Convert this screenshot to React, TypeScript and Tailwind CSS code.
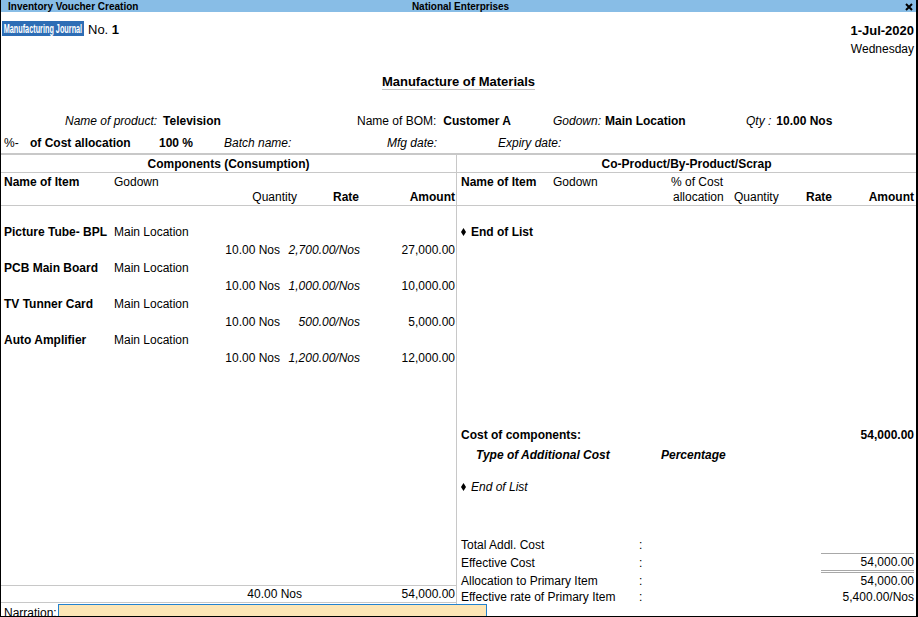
import React from 'react';

const items = [
  { name: 'Picture Tube- BPL', godown: 'Main Location', qty: '10.00 Nos', rate: '2,700.00/Nos', amount: '27,000.00' },
  { name: 'PCB Main Board', godown: 'Main Location', qty: '10.00 Nos', rate: '1,000.00/Nos', amount: '10,000.00' },
  { name: 'TV Tunner Card', godown: 'Main Location', qty: '10.00 Nos', rate: '500.00/Nos', amount: '5,000.00' },
  { name: 'Auto Amplifier', godown: 'Main Location', qty: '10.00 Nos', rate: '1,200.00/Nos', amount: '12,000.00' },
];

function Diamond() {
  return (
    <svg width="5" height="8" viewBox="0 0 5 8" className="inline-block mr-[5px] mb-[2px]">
      <polygon points="2.5,0 5,4 2.5,8 0,4" fill="black" />
    </svg>
  );
}

export default function App() {
  return (
    <div className="w-[918px] h-[617px] overflow-hidden bg-white text-black font-['Liberation_Sans',Arial,sans-serif] text-[12px] leading-[16px] flex flex-col border-l border-r-2 border-b border-black">
      {/* title bar */}
      <div className="h-[12px] bg-[#88bde6] flex items-center text-[10px] leading-[12px] font-bold pt-[1px]">
        <div className="flex-1 pl-[7px]">Inventory Voucher Creation</div>
        <div>National Enterprises</div>
        <div className="flex-1 flex justify-end pr-[3px]">
          <svg width="8" height="8" viewBox="0 0 8 8">
            <path d="M1 1L7 7M7 1L1 7" stroke="black" strokeWidth="2" />
          </svg>
        </div>
      </div>

      {/* header */}
      <div className="h-[141px] shrink-0">
        <div className="flex justify-between pt-[9px] pl-[1px] pr-[2px]">
          <div className="flex items-center h-[15px]">
            <div className="w-[82px] h-[15px] bg-[#2d6db5] overflow-hidden">
              <span className="block origin-left scale-x-[0.56] text-white font-bold text-[13px] leading-[15px] whitespace-nowrap pl-[3px]">
                Manufacturing Journal
              </span>
            </div>
            <span className="ml-[4px] text-[13px] mt-[2px]">
              No. <b>1</b>
            </span>
          </div>
          <div className="text-right pt-[1px]">
            <div className="font-bold text-[13px] leading-[16px] mt-[1px]">1-Jul-2020</div>
            <div className="leading-[16px] mt-[2px]">Wednesday</div>
          </div>
        </div>
        <div className="mt-[17px] flex justify-center">
          <span className="font-bold text-[13px] leading-[15px] border-b border-[#c4c4c4]">Manufacture of Materials</span>
        </div>
        <div className="mt-[23px] flex pl-[64px] whitespace-nowrap">
          <div className="w-[292px]">
            <i>Name of product:</i>
            <b className="ml-[6px]">Television</b>
          </div>
          <div className="w-[196px]">
            Name of BOM:<b className="ml-[7px]">Customer A</b>
          </div>
          <div className="w-[193px]">
            <i>Godown:</i>
            <b className="ml-[4px]">Main Location</b>
          </div>
          <div>
            <i>Qty :</i>
            <b className="ml-[5px]">10.00 Nos</b>
          </div>
        </div>
        <div className="mt-[6px] flex pl-[3px] whitespace-nowrap">
          <span className="w-[26px]">%-</span>
          <b className="w-[129px]">of Cost allocation</b>
          <b className="w-[65px]">100 %</b>
          <i className="w-[163px]">Batch name:</i>
          <i className="w-[111px]">Mfg date:</i>
          <i>Expiry date:</i>
        </div>
      </div>

      {/* panes */}
      <div className="h-[451px] shrink-0 flex border-t-2 border-[#c8c8c8]">
        {/* components */}
        <div className="w-[456px] flex flex-col border-r border-[#c8c8c8]">
          <div className="h-[18px] border-b border-[#c8c8c8] text-center font-bold pt-[1px] leading-[16px]">Components (Consumption)</div>
          <div className="h-[33px] border-b border-[#c8c8c8] pl-[3px] pr-[1px] pt-[1px]">
            <div className="flex">
              <b className="w-[110px]">Name of Item</b>
              <span>Godown</span>
            </div>
            <div className="flex leading-[15px]">
              <div className="w-[293px] text-right">Quantity</div>
              <div className="w-[62px] text-right font-bold">Rate</div>
              <div className="flex-1 text-right font-bold">Amount</div>
            </div>
          </div>
          <div className="flex-1 pt-[17px] pl-[3px] pr-[1px] leading-[18px]">
            {items.map((it) => (
              <div key={it.name}>
                <div className="flex">
                  <b className="w-[110px] whitespace-nowrap">{it.name}</b>
                  <span>{it.godown}</span>
                </div>
                <div className="flex">
                  <div className="w-[276px] text-right">{it.qty}</div>
                  <div className="w-[80px] text-right italic">{it.rate}</div>
                  <div className="flex-1 text-right">{it.amount}</div>
                </div>
              </div>
            ))}
          </div>
          <div className="border-t border-b border-[#c8c8c8] mb-[1px] flex pl-[3px] pr-[1px] pt-[1px] leading-[15px]">
            <div className="w-[298px] text-right">40.00 Nos</div>
            <div className="flex-1 text-right">54,000.00</div>
          </div>
        </div>

        {/* co-product */}
        <div className="flex-1 flex flex-col">
          <div className="h-[18px] border-b border-[#c8c8c8] text-center font-bold pt-[1px] leading-[16px]">Co-Product/By-Product/Scrap</div>
          <div className="h-[33px] border-b border-[#c8c8c8] pl-[4px] pr-[2px] pt-[1px]">
            <div className="flex">
              <b className="w-[92px]">Name of Item</b>
              <span className="w-[118px]">Godown</span>
              <span>% of Cost</span>
            </div>
            <div className="flex leading-[15px]">
              <div className="w-[212px]" />
              <div className="w-[61px]">allocation</div>
              <div className="w-[50px]">Quantity</div>
              <div className="w-[48px] text-right font-bold">Rate</div>
              <div className="flex-1 text-right font-bold">Amount</div>
            </div>
          </div>
          <div className="pt-[17px] pl-[4px] leading-[18px] font-bold">
            <Diamond />
            End of List
          </div>
          <div className="mt-auto pl-[4px] pr-[2px]">
            <div className="flex font-bold pt-[1px]">
              <div className="flex-1">Cost of components:</div>
              <div>54,000.00</div>
            </div>
            <div className="mt-[4px] flex font-bold italic">
              <div className="w-[200px] pl-[15px]">Type of Additional Cost</div>
              <div>Percentage</div>
            </div>
            <div className="mt-[16px] italic">
              <Diamond />
              End of List
            </div>
            <div className="mt-[42px] flex pt-[1px] leading-[15px]">
              <div className="w-[178px]">Total Addl. Cost</div>
              <div>:</div>
            </div>
            <div className="flex">
              <div className="w-[178px] pt-[2px]">Effective Cost</div>
              <div className="pt-[2px]">:</div>
              <div className="flex-1" />
              <div className="w-[93px] text-right border-t border-b-[3px] border-double border-[#a8a8a8] pt-[1px] leading-[15px]">54,000.00</div>
            </div>
            <div className="flex pt-[1px] leading-[15px]">
              <div className="w-[178px]">Allocation to Primary Item</div>
              <div>:</div>
              <div className="flex-1 text-right">54,000.00</div>
            </div>
            <div className="flex pt-[1px] leading-[14px]">
              <div className="w-[178px]">Effective rate of Primary Item</div>
              <div>:</div>
              <div className="flex-1 text-right">5,400.00/Nos</div>
            </div>
          </div>
        </div>
      </div>

      {/* narration */}
      <div className="flex-1 flex overflow-hidden">
        <div className="w-[57px] pl-[3px] pt-[1px] leading-[16px]">Narration:</div>
        <div className="w-[429px] h-[14px] bg-[#fde6b6] border-t border-l border-r border-[#2282d0]" />
      </div>
    </div>
  );
}
